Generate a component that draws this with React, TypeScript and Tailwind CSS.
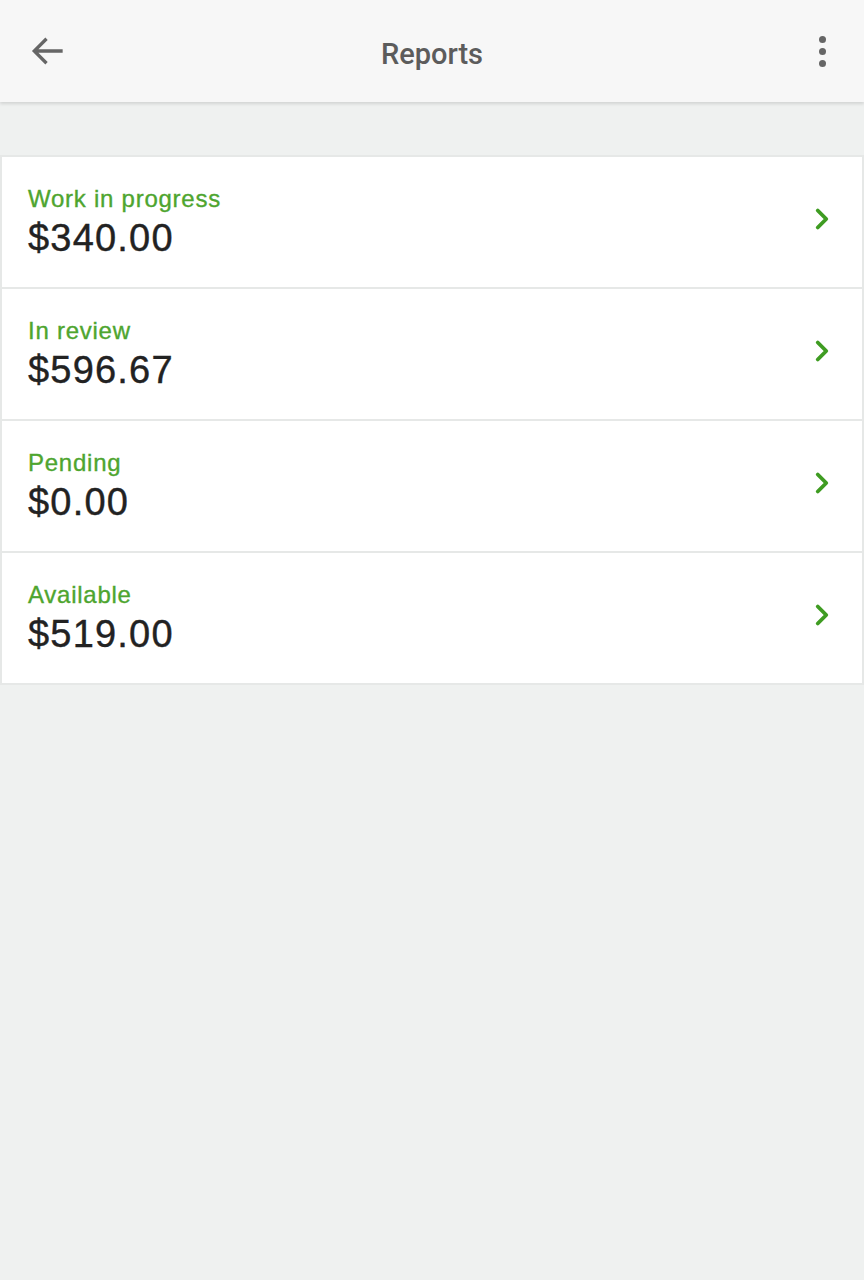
import { ChevronRight } from "lucide-react";

type Row = { label: string; amount: string };

const rows: Row[] = [
  { label: "Work in progress", amount: "$340.00" },
  { label: "In review", amount: "$596.67" },
  { label: "Pending", amount: "$0.00" },
  { label: "Available", amount: "$519.00" },
];

function BackArrow() {
  return (
    <svg width="44" height="44" viewBox="0 0 24 24" fill="none" className="text-[#666]">
      <path d="M20 12H5M11.2 5.3 4.5 12l6.7 6.7" stroke="currentColor" strokeWidth="1.8" />
    </svg>
  );
}

export default function App() {
  return (
    <div className="min-h-[1280px] bg-[#eff1f0] font-['Liberation_Sans',Arial,sans-serif]">
      <header className="relative flex h-[102px] items-center justify-between bg-[#f7f7f7] pl-[26px] pr-[27px] shadow-[0_2px_3px_rgba(0,0,0,0.12)]">
        <BackArrow />
        <h1 className="absolute left-1/2 top-[55px] -translate-x-1/2 -translate-y-1/2 font-['Roboto',sans-serif] text-[29px] font-medium text-[#5c5c5c]">
          Reports
        </h1>
        <div className="flex flex-col items-center gap-[5px] pr-[11px]">
          <span className="h-[7px] w-[7px] rounded-full bg-[#666]" />
          <span className="h-[7px] w-[7px] rounded-full bg-[#666]" />
          <span className="h-[7px] w-[7px] rounded-full bg-[#666]" />
        </div>
      </header>

      <div className="mt-[53px] border-x-2 border-t-2 border-[#e6e8e7] bg-white">
        {rows.map((r) => (
          <div key={r.label} className="flex h-[132px] items-center justify-between border-b-2 border-[#e6e8e7] pl-[26px] pr-[23px]">
            <div className="flex flex-col pt-[1px]">
              <span className="text-[24px] leading-[30px] tracking-[0.75px] text-[#4ea52f] [-webkit-text-stroke:0.35px_currentColor]">
                {r.label}
              </span>
              <span className="text-[38px] leading-[48px] tracking-[1.2px] text-[#222] [-webkit-text-stroke:0.4px_currentColor]">
                {r.amount}
              </span>
            </div>
            <ChevronRight className="mb-[6px] h-[34px] w-[34px] text-[#3f9c22]" strokeWidth={2.7} />
          </div>
        ))}
      </div>
    </div>
  );
}
